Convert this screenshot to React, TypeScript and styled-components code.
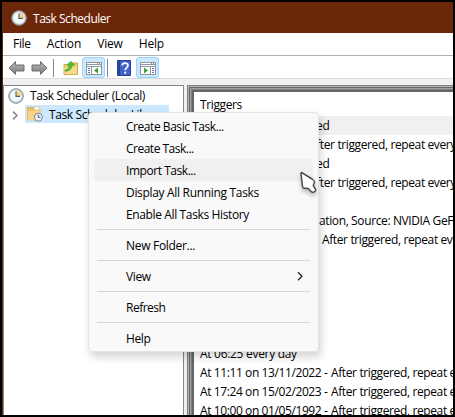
import React from 'react';
import styled, { createGlobalStyle } from 'styled-components';

const Global = createGlobalStyle`
  * { box-sizing: border-box; }
  body {
    margin: 0;
    overflow: hidden;
    font-family: "Open Sans", "Noto Sans", sans-serif;
    font-size: 12px;
    color: #000;
  }
`;

const Window = styled.div`
  position: relative;
  width: 455px;
  height: 417px;
  border: 2px solid #000;
  background: #f0f0f0;
  display: flex;
  flex-direction: column;
  overflow: hidden;
`;

const Label = styled.span<{ $track?: number }>`
  white-space: pre;
  letter-spacing: ${(p) => p.$track ?? -0.38}px;
`;

const TitleBar = styled.header`
  height: 31px;
  flex: none;
  display: flex;
  align-items: center;
  gap: 6px;
  padding: 1px 0 0 9px;
  background: #6c270a;
  color: #fff;

  svg {
    margin-top: -1px;
  }
`;

const Frame = styled.div`
  flex: 1;
  min-height: 0;
  display: flex;
  flex-direction: column;
  border-left: 1px solid #6c270a;
`;

const MenuBar = styled.nav`
  height: 23px;
  flex: none;
  display: flex;
  align-items: center;
  gap: 16px;
  padding: 0 0 1px 10px;
  background: #fff;
  border-bottom: 1px solid #b2b2b4;
`;

const Toolbar = styled.div`
  height: 23px;
  flex: none;
  display: flex;
  align-items: center;
  padding-left: 5px;
  background: #fff;
  border-bottom: 1px solid #dadada;
`;

const Tool = styled.span<{ $w: number; $active?: boolean }>`
  width: ${(p) => p.$w}px;
  height: 21px;
  display: flex;
  align-items: center;
  justify-content: center;
  padding-top: 2px;
  border-radius: 3px;
  ${(p) => p.$active && 'background: #cce8ff; border: 1px solid #99d1ff; margin-left: 3px;'}
`;

const ToolRule = styled.i<{ $before: number; $after: number }>`
  width: 1px;
  height: 18px;
  margin: 1px ${(p) => p.$after}px 0 ${(p) => p.$before}px;
  background: #858585;
`;

const Panes = styled.main`
  flex: 1;
  min-height: 0;
  display: flex;
  gap: 3px;
  padding-top: 6px;
`;

const TreePane = styled.section`
  width: 181px;
  flex: none;
  background: #fff;
  border: 1px solid #828790;
  border-bottom: 0;
`;

const TreeRow = styled.div`
  height: 19px;
  display: flex;
  align-items: center;
  padding-left: 4px;
  gap: 6px;
`;

const Twisty = styled.span`
  width: 13px;
  margin-right: 1px;
  padding: 2px 0 0 1px;
  display: flex;
  align-items: center;
  justify-content: center;
`;

const Selected = styled.div`
  height: 18px;
  width: 144px;
  margin: -1px 0 0 -3px;
  display: flex;
  align-items: center;
  gap: 6px;
  padding-left: 2px;
  background: #cce8ff;
`;

const ListPane = styled.section`
  flex: 1;
  min-width: 0;
  display: flex;
  border: 1px solid #828282;
  border-width: 1px 0 0 1px;
  box-shadow:
    inset 1px 1px 0 #b0b0b0,
    inset 2px 2px 0 #696969,
    inset 3px 3px 0 #a0a0a0,
    inset 4px 4px 0 #808080,
    inset 6px 6px 0 #656565;
  padding: 6px 0 0 6px;
`;

const List = styled.div`
  flex: 1;
  min-width: 0;
  overflow: hidden;
  background: #fff;
`;

const ListHeader = styled.div`
  height: 24px;
  padding: 4px 0 0 6px;
  line-height: 17px;
`;

const ListRow = styled.div<{ $shade?: boolean }>`
  height: 19px;
  padding-left: 6px;
  display: flex;
  align-items: center;
  background: ${(p) => (p.$shade ? '#f0f0f0' : '#fff')};
`;

const Lead = styled.span<{ $w: number }>`
  flex: none;
  width: ${(p) => p.$w}px;
  overflow: hidden;
`;

const ContextMenu = styled.div`
  position: absolute;
  left: 86px;
  top: 110px;
  width: 231px;
  height: 240px;
  padding: 2px 5px;
  background: #f9f9f9;
  border: 1px solid #e4e4e4;
  border-radius: 4px;
  box-shadow: 2px 5px 9px rgba(0, 0, 0, 0.17);
`;

const MenuItem = styled.div<{ $hover?: boolean }>`
  height: 22px;
  display: flex;
  align-items: center;
  justify-content: space-between;
  padding: 0 9px 0 32px;
  border-radius: 4px;
  background: ${(p) => (p.$hover ? '#f0f0f0' : 'transparent')};
`;

const MenuRule = styled.div`
  height: 1px;
  margin: 4px 3px;
  background: #d6d6d6;
`;

const Pointer = styled.svg`
  position: absolute;
  left: 296px;
  top: 167px;
  filter: drop-shadow(0 3px 2px rgba(0, 0, 0, 0.25));
`;

const Clock = () => (
  <svg width="16" height="16" viewBox="0 0 16 16">
    <circle cx="8" cy="8" r="7.3" fill="#c3cbd1" stroke="#868c92" />
    <circle cx="8" cy="8" r="5.7" fill="#f4f8fb" stroke="#dfe5e9" strokeWidth=".6" />
    <path d="M8 8V2.5A5.5 5.5 0 0 1 13.5 8Z" fill="#f4d58d" />
    <path d="M8 3.4V8.4H12" fill="none" stroke="#4c5c70" strokeWidth="1.1" />
  </svg>
);

const FolderClock = () => (
  <svg width="16" height="16" viewBox="0 0 16 16">
    <path d="M.5 1.5H6L7 3H13V14H.5Z" fill="#e9bd58" stroke="#d8a640" strokeWidth=".7" />
    <path d="M7 1H12.5V4H7Z" fill="#fff" stroke="#d7b166" strokeWidth=".6" />
    <path d="M.8 4.5H13V14H.8Z" fill="#f8d488" />
    <circle cx="11.4" cy="11.2" r="4" fill="#edf3f7" stroke="#7c868e" />
    <path d="M11.3 8.6V11.3H13.5" fill="none" stroke="#4c5c70" />
  </svg>
);

const Arrow = ({ flip }: { flip?: boolean }) => (
  <svg width="17" height="16" viewBox="0 0 17 16">
    <defs>
      <linearGradient id="steel" x1="0" y1="0" x2="0" y2="1">
        <stop offset="0" stopColor="#b8b8b8" />
        <stop offset=".5" stopColor="#999" />
        <stop offset="1" stopColor="#777" />
      </linearGradient>
    </defs>
    <path
      d="M1 8L7.5 1.5V5H16V11H7.5V14.5Z"
      transform={flip ? 'translate(17 0) scale(-1 1)' : undefined}
      fill="url(#steel)"
      stroke="#707070"
      strokeLinejoin="round"
    />
  </svg>
);

const FolderUp = () => (
  <svg width="16" height="16" viewBox="0 0 16 16">
    <path d="M1 4.5H8L9 3H14.5V14.5H1Z" fill="#f0cb68" stroke="#c99d3a" strokeWidth=".8" />
    <path d="M1.5 7H14V14H1.5Z" fill="#f8dc8c" />
    <path
      d="M2 10.2C5 9.6 6 7.5 6 4.8H3.8L8 1.2L11.5 5H9.3C9 8.6 6.4 11.2 2 11.2Z"
      fill="#4cc23a"
      stroke="#2b9429"
      strokeWidth=".5"
    />
  </svg>
);

const PaneIcon = ({ right }: { right?: boolean }) => (
  <svg width="16" height="14" viewBox="0 0 16 14" shapeRendering="crispEdges">
    <path d="M0 1H16V14H0Z" fill="#8f979e" />
    <path d="M1 2H11V3H1ZM12 2H13V3H12ZM14 2H15V3H14ZM1 4H15V5H1Z" fill="#fff" />
    <path d="M1 6H15V13H1Z" fill="#fff" />
    <path d={right ? 'M10 6H11V14H10Z' : 'M5 6H6V14H5Z'} fill="#8f979e" />
    <path
      d={right ? 'M12 7H14V8H12ZM12 9H14V10H12ZM12 11H14V12H12Z' : 'M2 7H4V8H2ZM2 9H4V10H2ZM2 11H4V12H2Z'}
      fill="#4f7fa8"
    />
    <path d={right ? 'M4 6.5L8 9.5L4 12.5Z' : 'M12 6.5L8 9.5L12 12.5Z'} fill="#35a335" shapeRendering="auto" />
  </svg>
);

const HelpBook = () => (
  <svg width="14" height="16" viewBox="0 0 14 16">
    <path d="M.5 .5H13.5V15.5H.5Z" fill="#3f62cc" stroke="#2b4295" />
    <path d="M1 1H3V15H1Z" fill="#27419c" />
    <path d="M5.2 5.6C5.2 2.3 11 2.3 11 5.6C11 7.5 8.2 7.8 8.2 10.2" fill="none" stroke="#fff" strokeWidth="1.7" />
    <circle cx="8.2" cy="12.7" r="1.1" fill="#fff" />
  </svg>
);

type Entry = { lead?: string; w?: number; text: string; shade?: boolean };

const rows: Entry[] = [
  { text: 'Multiple triggers defined', shade: true },
  { lead: 'At 06:10 every day - ', w: 109, text: 'After triggered, repeat every' },
  { text: 'Multiple triggers defined' },
  { lead: 'At 07:10 every day - ', w: 109, text: 'After triggered, repeat every' },
  { text: '' },
  { lead: 'On event - Log: Applic', w: 119, text: 'ation, Source: NVIDIA GeForce' },
  { lead: 'At 10:00 on 1/5/22 -', w: 122, text: 'After triggered, repeat every' },
  { text: '' },
  { text: '' },
  { text: '' },
  { text: '' },
  { text: '' },
  { text: 'At 06:25 every day' },
  { lead: 'At 11:11 on 13/11/2022 -', w: 131, text: 'After triggered, repeat every' },
  { lead: 'At 17:24 on 15/02/2023 -', w: 131, text: 'After triggered, repeat every' },
  { lead: 'At 10:00 on 01/05/1992 -', w: 131, text: 'After triggered, repeat every' },
];

const groups: { text: string; track?: number; submenu?: boolean; hover?: boolean }[][] = [
  [
    { text: 'Create Basic Task...', track: -0.45 },
    { text: 'Create Task...', track: -0.5 },
    { text: 'Import Task...', track: -0.45, hover: true },
    { text: 'Display All Running Tasks', track: -0.32 },
    { text: 'Enable All Tasks History', track: -0.37 },
  ],
  [{ text: 'New Folder...', track: -0.3 }],
  [{ text: 'View', submenu: true }],
  [{ text: 'Refresh', track: -0.5 }],
  [{ text: 'Help' }],
];

export default function App() {
  return (
    <>
      <Global />
      <Window>
        <TitleBar>
          <Clock />
          <Label $track={-0.48}>Task Scheduler</Label>
        </TitleBar>
        <Frame>
          <MenuBar>
            <Label $track={-0.3}>File</Label>
            <Label $track={-0.15}>Action</Label>
            <Label $track={-0.15}>View</Label>
            <Label $track={-0.2}>Help</Label>
          </MenuBar>
          <Toolbar>
            <Tool $w={17}><Arrow /></Tool>
            <Tool $w={29}><Arrow flip /></Tool>
            <ToolRule $before={-1} $after={8} />
            <Tool $w={17}><FolderUp /></Tool>
            <Tool $w={23} $active><PaneIcon /></Tool>
            <ToolRule $before={2} $after={7} />
            <Tool $w={18}><HelpBook /></Tool>
            <Tool $w={23} $active><PaneIcon right /></Tool>
          </Toolbar>
          <Panes>
            <TreePane>
              <TreeRow>
                <Clock />
                <Label>Task Scheduler (Local)</Label>
              </TreeRow>
              <TreeRow>
                <Twisty>
                  <svg width="7" height="9" viewBox="0 0 7 9">
                    <path d="M1 .7L5 4.5L1 8.3" fill="none" stroke="#8a8a8a" strokeWidth="1.6" />
                  </svg>
                </Twisty>
                <Selected>
                  <FolderClock />
                  <Label>Task Scheduler Library</Label>
                </Selected>
              </TreeRow>
            </TreePane>
            <ListPane>
              <List>
                <ListHeader><Label>Triggers</Label></ListHeader>
                {rows.map((r, i) => (
                  <ListRow key={i} $shade={r.shade}>
                    {r.lead && <Lead $w={r.w ?? 0}><Label $track={-0.4}>{r.lead}</Label></Lead>}
                    <Label $track={r.lead ? -0.38 : -0.3}>{r.text}</Label>
                  </ListRow>
                ))}
              </List>
            </ListPane>
          </Panes>
        </Frame>
        <ContextMenu>
          {groups.map((items, i) => (
            <React.Fragment key={i}>
              {i > 0 && <MenuRule />}
              {items.map((item) => (
                <MenuItem key={item.text} $hover={item.hover}>
                  <Label $track={item.track}>{item.text}</Label>
                  {item.submenu && (
                    <svg width="8" height="10" viewBox="0 0 8 10">
                      <path d="M2 1.3L6 5.3L2 9.3" fill="none" stroke="#222" strokeWidth="1.3" />
                    </svg>
                  )}
                </MenuItem>
              ))}
            </React.Fragment>
          ))}
        </ContextMenu>
        <Pointer width="24" height="28" viewBox="0 0 24 28">
          <path
            d="M3 4.5C2.8 3.7 3.5 3.4 4.2 3.8L14 10C15.8 11.2 16.8 12 16.5 13.4C16.2 14.6 15.2 15.2 15.4 16.8L17.6 20.4C18.2 22 16.2 23.4 14.4 23.2C12.8 23 12.2 22 11 20.2C9.8 18.8 7.4 19.4 6 19.2C4.8 19 4.6 18.2 4.5 17.2Z"
            fill="#fff"
            stroke="#484848"
            strokeWidth="1.5"
            strokeLinejoin="round"
          />
        </Pointer>
      </Window>
    </>
  );
}
